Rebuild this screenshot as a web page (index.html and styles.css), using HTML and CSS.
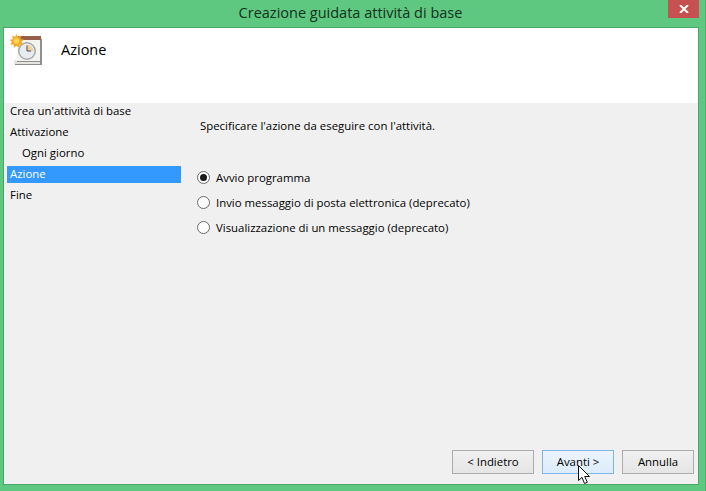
FILE: index.html
```html
<!DOCTYPE html>
<html lang="it">
<head>
<meta charset="utf-8">
<title>Creazione guidata attività di base</title>
<link rel="stylesheet" href="styles.css">
</head>
<body>
<div class="window">
  <div class="titlebar">
    <div class="title">Creazione guidata attività di base</div>
    <div class="close">
      <svg width="10" height="8" viewBox="0 0 10 8"><path d="M1 0l8 8M9 0L1 8" stroke="#fff" stroke-width="2" fill="none"/></svg>
    </div>
  </div>
  <div class="client">
    <header class="head">
      <svg class="head-icon" width="32" height="33" viewBox="0 0 32 33">
        <rect x="5" y="28" width="27" height="4" fill="#8c8c8c"/>
        <rect x="4" y="27" width="26" height="4" fill="#e6e4de"/>
        <rect x="7" y="6" width="25" height="23" fill="#8f8f8f"/>
        <rect x="7" y="6" width="23" height="22" fill="#f5f3ef"/>
        <rect x="8" y="3" width="23" height="4" fill="#96604a"/>
        <circle cx="17" cy="18" r="9" fill="#a4a9ae"/>
        <circle cx="17" cy="18" r="7.500" fill="#e8ecf0"/>
        <path d="M17 11.500a6.500 6.500 0 0 1 6.500 6.500H17z" fill="#f1d49c"/>
        <path d="M17 12.500V18h4" stroke="#3d4a5c" stroke-width="1" fill="none"/>
        <path d="M6.500 1l1.300 3.200L11 2.500l-.5 3.500 3.500.8-2.800 2 2 3-3.600-.4-.3 3.600-2.800-2.500L3.800 15l-.2-3.700-3.300.7 1.800-3L0 7l3-1-.8-3.500 3 1.600z" fill="#f6a51c"/>
        <circle cx="6.500" cy="8" r="3" fill="#ffd24f"/>
      </svg>
      <h1 class="head-title">Azione</h1>
    </header>
    <div class="main">
      <nav class="steps">
        <div class="step">Crea un'attività di base</div>
        <div class="step">Attivazione</div>
        <div class="step step-sub">Ogni giorno</div>
        <div class="step step-active">Azione</div>
        <div class="step step-last">Fine</div>
      </nav>
      <section class="content">
        <p class="prompt">Specificare l'azione da eseguire con l'attività.</p>
        <div class="options">
          <div class="option"><span class="radio radio-on"></span>Avvio programma</div>
          <div class="option"><span class="radio"></span>Invio messaggio di posta elettronica (deprecato)</div>
          <div class="option"><span class="radio"></span>Visualizzazione di un messaggio (deprecato)</div>
        </div>
      </section>
    </div>
    <footer class="buttons">
      <div class="btn btn-back">&lt; Indietro</div>
      <div class="btn btn-hover">Avanti &gt;</div>
      <div class="btn btn-cancel">Annulla</div>
    </footer>
    <svg class="cursor" width="13" height="20" viewBox="0 0 13 20">
      <path d="M.5.500v15l3.500-3.200 2.500 6.200 2.800-1.200-2.600-5.800h4.800z" fill="#fff" stroke="#111" stroke-width="1"/>
    </svg>
  </div>
</div>
</body>
</html>
```
FILE: styles.css
```css
html, body {
  margin: 0;
  padding: 0;
}
body {
  width: 706px;
  height: 491px;
  overflow: hidden;
  font-family: "Open Sans", "Noto Sans", sans-serif;
  font-size: 11.400px;
  color: #000;
}
.window {
  box-sizing: border-box;
  width: 706px;
  height: 491px;
  background: #5fc880;
  border-right: 1px solid #4fb070;
  display: flex;
  flex-direction: column;
  position: relative;
}
.titlebar {
  height: 27px;
  flex: none;
  display: flex;
  justify-content: center;
  position: relative;
}
.title {
  font-size: 14.500px;
  line-height: 25px;
  color: #14301f;
  padding-right: 4px;
}
.close {
  position: absolute;
  top: 0;
  left: 668px;
  width: 31px;
  height: 18px;
  background: #c75050;
  display: flex;
  align-items: center;
  justify-content: center;
}
.client {
  flex: none;
  box-sizing: border-box;
  width: 696px;
  height: 458px;
  margin-left: 3px;
  border: 1px solid #4aa96a;
  background: #f0f0f0;
  display: flex;
  flex-direction: column;
  position: relative;
}
.head {
  flex: none;
  height: 75px;
  background: #fff;
  display: flex;
  align-items: flex-start;
  box-sizing: border-box;
  padding: 5px 0 0 6px;
}
.head-icon {
  flex: none;
}
.head-title {
  margin: 7px 0 0 19px;
  font-size: 14.500px;
  font-weight: 400;
  line-height: 20px;
}
.main {
  flex: 1;
  display: flex;
}
.steps {
  flex: none;
  width: 174px;
  margin: -1px 0 0 3px;
}
.step {
  height: 17px;
  line-height: 17px;
  padding-left: 3px;
  margin-top: 4px;
  white-space: nowrap;
}
.step:first-child {
  margin-top: 0;
}
.step-sub {
  padding-left: 15px;
}
.step-active {
  margin-top: 5px;
  line-height: 15px;
  background: #3399ff;
  color: #fff;
}
.step-last {
  margin-top: 3px;
}
.content {
  flex: 1;
  padding-left: 19px;
}
.prompt {
  margin: 14px 0 0;
  line-height: 17px;
}
.options {
  margin-top: 35px;
  display: flex;
  flex-direction: column;
  gap: 8px;
}
.option {
  display: flex;
  align-items: center;
  height: 17px;
  margin-left: -3px;
  white-space: nowrap;
}
.radio {
  box-sizing: border-box;
  width: 13px;
  height: 13px;
  border: 1px solid #6a6a6a;
  border-radius: 50%;
  background: #fff;
  margin-right: 6px;
  display: flex;
  align-items: center;
  justify-content: center;
  flex: none;
}
.radio-on::after {
  content: "";
  width: 7px;
  height: 7px;
  border-radius: 50%;
  background: #1a1a1a;
}
.buttons {
  flex: none;
  height: 34px;
  display: flex;
  align-items: flex-start;
  box-sizing: border-box;
  padding-left: 448px;
}
.btn {
  box-sizing: border-box;
  height: 24px;
  line-height: 22px;
  text-align: center;
  border: 1px solid #acacac;
  background: linear-gradient(#f0f0f0, #e5e5e5);
}
.btn-back {
  width: 82px;
}
.btn-hover {
  width: 72px;
  margin-left: 8px;
  border-color: #7eb4ea;
  background: linear-gradient(#ecf4fc, #dcecfc);
}
.btn-cancel {
  width: 72px;
  margin-left: 8px;
}
.cursor {
  position: absolute;
  left: 574px;
  top: 437px;
}
```
